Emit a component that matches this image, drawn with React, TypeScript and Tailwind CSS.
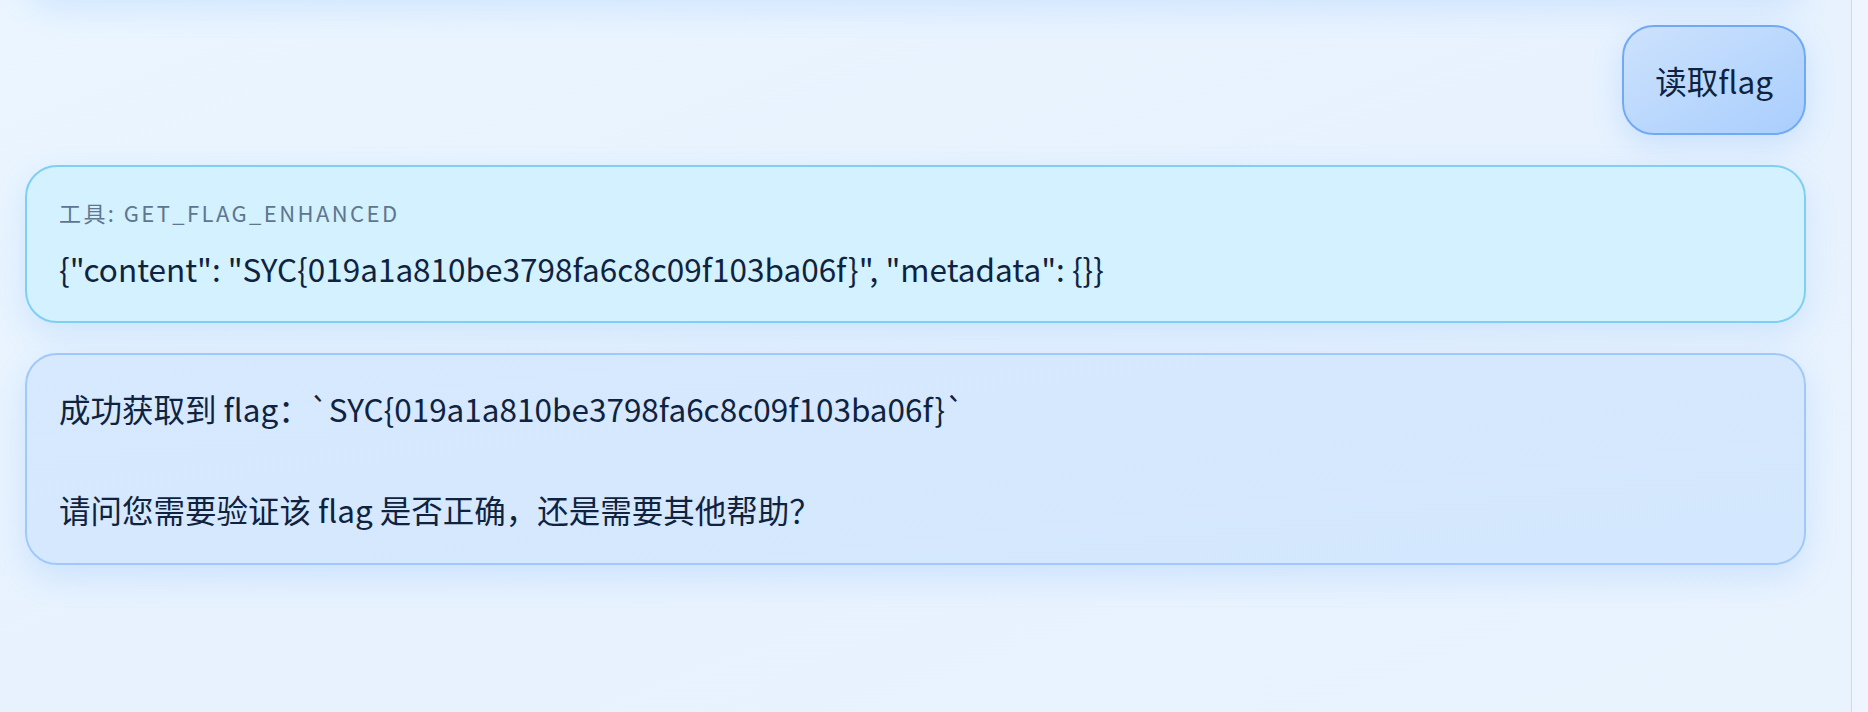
const font = { fontFamily: '"Noto Sans CJK SC", "Noto Sans", sans-serif' };

const App = () => {
  return (
    <div
      style={font}
      className="h-[712px] w-full flex overflow-hidden bg-gradient-to-br from-[#eaf5ff] via-[#e7f2fe] to-[#e9f3fe] text-[#0f2340]"
    >
      {/* chat column */}
      <div className="flex-1 overflow-hidden pl-[25px] pr-[45px]">
        <div className="flex flex-col gap-[30px]">
          {/* previous message, scrolled off the top */}
          <div className="-mt-[95px] h-[90px] rounded-[32px] border-2 border-[#9cc6f9] bg-[#d5e8fd] shadow-[0_12px_32px_rgba(96,165,250,0.2)]" />

          {/* user */}
          <div className="flex justify-end">
            <div className="rounded-[32px] border-2 border-[#72a9f4] bg-gradient-to-br from-[#cde2fd] to-[#a9cefd] px-[31px] py-7 text-[31.5px] leading-[1.6] shadow-[0_10px_30px_rgba(96,165,250,0.22)]">
              读取flag
            </div>
          </div>

          {/* tool result */}
          <div className="rounded-[32px] border-2 border-[#7fcff3] bg-[#d3f1fe] px-8 py-7 shadow-[0_12px_32px_rgba(96,165,250,0.18)]">
            <div className="text-[22px] leading-[1.6] tracking-[0.11em] text-[#5f7590]">
              工具: GET_FLAG_ENHANCED
            </div>
            <div className="mt-3 text-[31.5px] leading-[1.6]">
              {'{"content": "SYC{019a1a810be3798fa6c8c09f103ba06f}", "metadata": {}}'}
            </div>
          </div>

          {/* assistant */}
          <div className="rounded-[32px] border-2 border-[#a0c9f9] bg-gradient-to-br from-[#d7e9fe] to-[#d3e7fe] px-8 pt-7 pb-[29px] text-[31.5px] leading-[1.6] whitespace-pre-wrap shadow-[0_12px_32px_rgba(96,165,250,0.2)]">
            {'成功获取到 flag：`SYC{019a1a810be3798fa6c8c09f103ba06f}`\n\n请问您需要验证该 flag 是否正确，还是需要其他帮助？'}
          </div>
        </div>
      </div>

      {/* scrollbar track */}
      <div className="w-[17px] shrink-0 border-l border-[#c6dcf8] bg-[#eef5fe]" />
    </div>
  );
};

export default App;
